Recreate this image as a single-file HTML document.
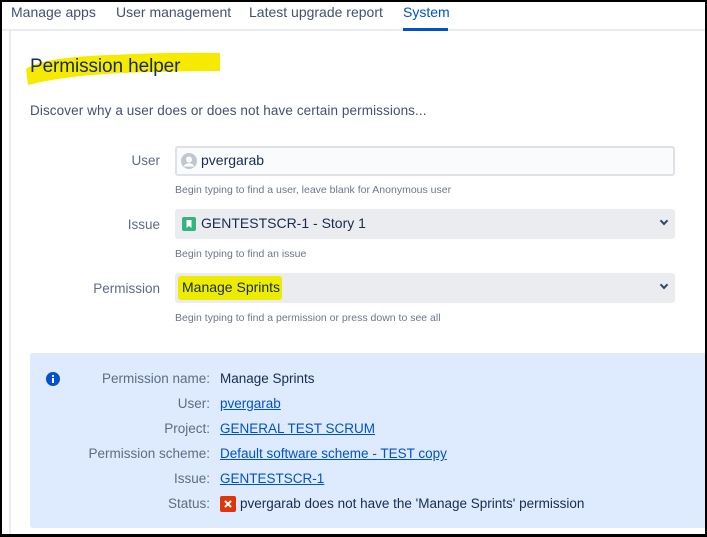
<!DOCTYPE html>
<html><head><meta charset="utf-8"><style>
*{box-sizing:border-box;margin:0;padding:0}
html,body{width:707px;height:537px;overflow:hidden;background:#000}
body{font-family:"Liberation Sans",sans-serif;color:#172b4d;position:relative}
.page{position:absolute;left:2px;top:2px;width:703px;height:532px;background:#fff;overflow:hidden}
.nav{position:absolute;left:0;top:0;width:703px;height:29px;border-bottom:2px solid #ebecf0}
.nav span{position:absolute;top:2px;font-size:14px;color:#42526e}
.nav .act{color:#0052cc}
.nav .ul{position:absolute;left:401px;top:26px;width:45px;height:3px;background:#0052cc}
.vl{position:absolute;left:7px;top:29px;width:2px;height:510px;background:#ebecf0}
h1{position:absolute;left:28px;top:54px;font-size:19px;font-weight:normal;color:#172b4d;letter-spacing:-0.1px}
.desc{position:absolute;left:28px;top:101px;font-size:13.5px;color:#42526e;letter-spacing:0.1px}
.lbl{position:absolute;width:158px;text-align:right;font-size:13.5px;color:#5e6c84}
.field{position:absolute;left:173px;width:500px;height:30px;border-radius:3px;background:#ebecf0}
.field.u{background:#fafbfc;border:2px solid #dfe1e6}
.field .t{position:absolute;left:26px;top:6px;font-size:14px;color:#172b4d}
.hint{position:absolute;left:173px;font-size:10.5px;color:#6b778c}
.chev{position:absolute;right:8px;top:11px;border-right:2px solid #344563;border-bottom:2px solid #344563;transform:rotate(45deg);width:6px;height:6px}
.info{position:absolute;left:28px;top:351px;width:680px;height:175px;background:#deebff;border-radius:3px}
.r{position:absolute;font-size:13.5px}
.r .k{position:absolute;right:495px;white-space:nowrap;color:#5e6c84;text-align:right}
.r .v{position:absolute;left:190px;white-space:nowrap;color:#172b4d}
.r a{color:#0052cc;text-decoration:underline}
</style></head><body><div class="page">
<div class="nav">
<span style="left:9px">Manage apps</span>
<span style="left:114px">User management</span>
<span style="left:247px">Latest upgrade report</span>
<span class="act" style="left:401px">System</span>
<div class="ul"></div>
</div>
<div class="vl"></div>
<svg style="position:absolute;left:20px;top:47px" width="202" height="40" viewBox="0 0 202 40"><path d="M4 20 Q20 8 90 6 Q150 3 198 4 L198 22 Q150 22 100 24 Q40 27 6 36 Z" fill="#f5ea00"/></svg>
<h1>Permission helper</h1>
<div class="desc">Discover why a user does or does not have certain permissions...</div>

<div class="lbl" style="top:151px">User</div>
<div class="field u" style="top:144px">
<svg style="position:absolute;left:4px;top:5px" width="16" height="16" viewBox="0 0 16 16"><circle cx="8" cy="8" r="8" fill="#c1c7d0"/><circle cx="8" cy="6.5" r="3" fill="#fff"/><path d="M2.5 13.5c1.5-2.5 3.5-3.3 5.5-3.3s4 .8 5.5 3.3" fill="#fff"/></svg>
<span class="t" style="left:24px;top:4px">pvergarab</span></div>
<div class="hint" style="top:182px">Begin typing to find a user, leave blank for Anonymous user</div>

<div class="lbl" style="top:215px">Issue</div>
<div class="field" style="top:207px">
<svg style="position:absolute;left:7px;top:8px" width="14" height="14" viewBox="0 0 14 14"><rect width="14" height="14" rx="2" fill="#36b37e"/><path d="M4.5 3h5v8L7 9 4.5 11z" fill="#fff"/></svg>
<span class="t">GENTESTSCR-1 - Story 1</span><div class="chev" style="top:9px"></div></div>
<div class="hint" style="top:246px">Begin typing to find an issue</div>

<div class="lbl" style="top:279px">Permission</div>
<div class="field" style="top:271px">
<div style="position:absolute;left:3px;top:3px;width:104px;height:24px;background:#eceb00;border-radius:3px"></div>
<span class="t" style="left:7px">Manage Sprints</span><div class="chev" style="top:9px"></div></div>
<div class="hint" style="top:310px">Begin typing to find a permission or press down to see all</div>

<div class="info">
<svg style="position:absolute;left:16px;top:19px" width="14" height="14" viewBox="0 0 14 14"><circle cx="7" cy="7" r="7" fill="#0052cc"/><rect x="6" y="6" width="2" height="5" fill="#fff"/><circle cx="7" cy="4" r="1.1" fill="#fff"/></svg>
</div>
<div class="r" style="left:0;top:369px;width:703px"><span class="k">Permission name:</span><span class="v" style="left:218px">Manage Sprints</span></div>
<div class="r" style="left:0;top:394px;width:703px"><span class="k">User:</span><span class="v" style="left:218px"><a>pvergarab</a></span></div>
<div class="r" style="left:0;top:419px;width:703px"><span class="k">Project:</span><span class="v" style="left:218px"><a>GENERAL TEST SCRUM</a></span></div>
<div class="r" style="left:0;top:444px;width:703px"><span class="k">Permission scheme:</span><span class="v" style="left:218px"><a>Default software scheme - TEST copy</a></span></div>
<div class="r" style="left:0;top:469px;width:703px"><span class="k">Issue:</span><span class="v" style="left:218px"><a>GENTESTSCR-1</a></span></div>
<div class="r" style="left:0;top:494px;width:703px"><span class="k">Status:</span><span class="v" style="left:218px">
<svg style="position:absolute;left:0;top:0" width="16" height="16" viewBox="0 0 16 16"><rect width="16" height="16" rx="2" fill="#de350b"/><path d="M5 5l6 6M11 5l-6 6" stroke="#fff" stroke-width="2"/></svg>
<span style="position:absolute;left:20px">pvergarab does not have the 'Manage Sprints' permission</span></span></div>
</div></body></html>
